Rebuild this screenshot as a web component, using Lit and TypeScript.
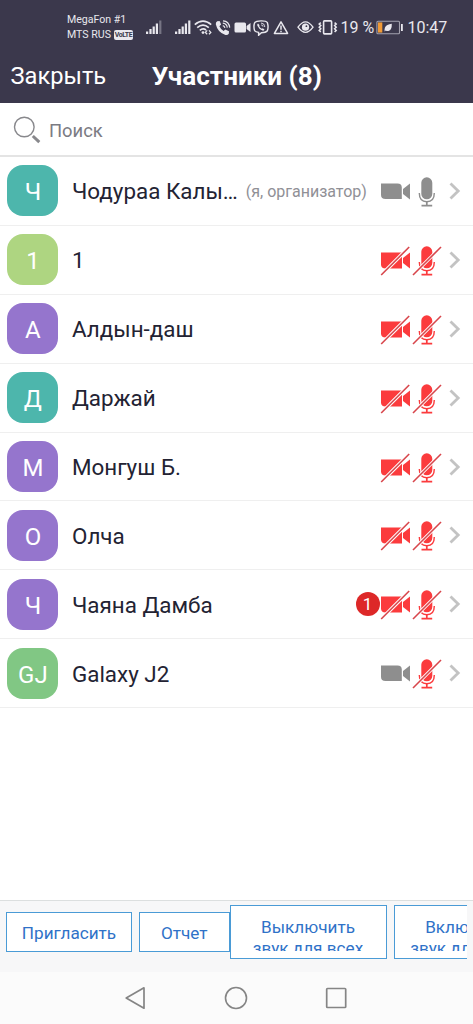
import { LitElement, html, svg, css, nothing } from "lit";
import { customElement, property } from "lit/decorators.js";
import { classMap } from "lit/directives/class-map.js";

interface Participant {
  name: string;
  initials: string;
  tone: "teal" | "lime" | "violet" | "green";
  note?: string;
  badge?: number;
  camera: boolean;
  mic: boolean;
}

const PEOPLE: Participant[] = [
  { name: "Чодураа Калы…", initials: "Ч", tone: "teal", note: "(я, организатор)", camera: true, mic: true },
  { name: "1", initials: "1", tone: "lime", camera: false, mic: false },
  { name: "Алдын-даш", initials: "А", tone: "violet", camera: false, mic: false },
  { name: "Даржай", initials: "Д", tone: "teal", camera: false, mic: false },
  { name: "Монгуш Б.", initials: "М", tone: "violet", camera: false, mic: false },
  { name: "Олча", initials: "О", tone: "violet", camera: false, mic: false },
  { name: "Чаяна Дамба", initials: "Ч", tone: "violet", badge: 1, camera: false, mic: false },
  { name: "Galaxy J2", initials: "GJ", tone: "green", camera: true, mic: false },
];

const signal = (dimLast: boolean) => html`
  <svg class="signal" width="17" height="15" viewBox="0 0 17 15" fill="#e9e8ee">
    <rect x="1" y="11.5" width="2.2" height="2.5" />
    <rect x="4.4" y="9" width="2.2" height="5" />
    <rect x="7.6" y="6.5" width="2.2" height="7.5" />
    <rect x="10.8" y="3.5" width="2.2" height="10.5" />
    <rect x="14.2" y="0.5" width="2.2" height="13.5" opacity=${dimLast ? 0.35 : 1} />
  </svg>
`;

@customElement("status-bar")
export class StatusBar extends LitElement {
  static styles = css`
    :host {
      display: flex;
      height: 50px;
      padding-left: 67px;
      box-sizing: border-box;
      color: #e9e8ee;
      align-items: flex-start;
      white-space: nowrap;
    }
    svg { display: block; flex: none; margin-top: 20px; }
    .carriers { width: 78px; padding-top: 12px; font-size: 10.6px; line-height: 15px; flex: none; }
    .line { display: flex; align-items: center; gap: 3px; }
    .volte {
      width: 19px; height: 10px; border-radius: 2px; background: #e9e8ee; color: #3b384c;
      font-size: 7px; line-height: 10px; font-weight: 700; text-align: center; letter-spacing: -0.4px;
    }
    .gap { margin-left: 11.5px; }
    .wifi { margin-left: 3px; }
    .phone { margin-left: 3px; }
    .cam { margin-left: 3px; }
    .viber { margin-left: 2px; }
    .warn { margin-left: 4px; }
    .eye { margin-left: 8px; }
    .vibe { margin-left: 4px; }
    .percent { margin: 16px 0 0 3px; width: 34px; font-size: 16px; line-height: 23px; flex: none; }
    .battery { margin-left: 1px; }
    .clock { margin: 16px 0 0 4px; font-size: 16px; line-height: 23px; flex: none; }
  `;

  render() {
    return html`
      <div class="carriers">
        <div class="line">MegaFon #1</div>
        <div class="line">MTS RUS <span class="volte">VoLTE</span></div>
      </div>
      ${signal(true)}
      <div class="gap">${signal(false)}</div>
      <svg class="wifi" width="18" height="15" viewBox="0 0 18 15" fill="none" stroke="#e9e8ee" stroke-width="1.7">
        <path d="M0.8 4.6Q9 -2.4 17.2 4.6M3.2 7.6Q9 2.6 14.8 7.6M5.8 10.4Q9 7.6 12 10" />
        <circle cx="9" cy="12.6" r="1.4" fill="#e9e8ee" stroke="none" />
        <path d="M13.2 10.4L11.4 12.4L13.2 14.2M15 10.4L16.8 12.4L15 14.2" stroke-width="1.3" />
      </svg>
      <svg class="phone" width="16" height="16" viewBox="0 0 16 16">
        <path d="M2.2 1.2L4.6 1L6.1 4.6L4.4 6.3Q5.7 9.4 8.6 11L10.3 9.5L14 11.3L13.8 13.7Q12.6 15.3 10.5 14.9Q2.7 12.6 0.8 4.2Q0.6 2.2 2.2 1.2Z" fill="#e9e8ee" />
        <path d="M8 0.8Q14 1.2 14.7 7.6M7.8 3.2Q11.8 3.6 12.3 7.6M7.8 5.6Q9.6 6 9.9 7.8" fill="none" stroke="#e9e8ee" stroke-width="1.2" />
      </svg>
      <svg class="cam" width="17" height="14" viewBox="0 0 17 14" fill="#e9e8ee">
        <rect x="0.5" y="2.5" width="11.5" height="10" rx="1.5" />
        <path d="M12.6 6L16.5 3V12L12.6 9Z" />
      </svg>
      <svg class="viber" width="16" height="16" viewBox="0 0 16 16" fill="none" stroke="#e9e8ee">
        <path d="M8 0.9Q13.2 0.8 14.4 2.7Q15.7 6.8 14.4 10.8Q12.8 12.8 8.4 12.8L5.6 15.3V12.4Q2.6 11.8 1.6 10.6Q0.3 6.6 1.6 2.8Q3 0.9 8 0.9Z" stroke-width="1.4" />
        <path d="M5 3.5Q3.8 4.3 4.4 5.7Q6 9.3 9.5 10.6Q11 10.8 11.4 9.4L9.8 8.2L8.8 8.8Q7 8 6.1 6L6.6 5.2Z" fill="#e9e8ee" stroke="none" />
        <path d="M8 3Q11.6 3.2 11.8 7M8.2 4.9Q9.8 5 10 6.6" stroke-width="0.9" />
      </svg>
      <svg class="warn" width="16" height="15" viewBox="0 0 16 15" fill="none" stroke="#e9e8ee">
        <path d="M8 1.8L14.6 13.4H1.4Z" stroke-width="1.5" stroke-linejoin="round" />
        <path d="M8 5.5V9.8M8 10.8V12.2" stroke-width="1.5" />
      </svg>
      <svg class="eye" width="17" height="15" viewBox="0 0 17 15">
        <path d="M1 7.2Q8.5 -3.4 16 7.2Q8.5 17.6 1 7.2Z" fill="none" stroke="#e9e8ee" stroke-width="1.4" />
        <circle cx="8.5" cy="7.2" r="3.6" fill="#e9e8ee" />
        <circle cx="9.4" cy="6.2" r="0.9" fill="#3b384c" />
      </svg>
      <svg class="vibe" width="20" height="15" viewBox="0 0 20 15" fill="none" stroke="#e9e8ee">
        <rect x="5.6" y="0.9" width="8" height="13" rx="0.8" stroke-width="1.6" />
        <path d="M2.8 2.6L1.2 4L2.8 5.6L1.2 7.2L2.8 8.8L1.2 10.4L2.8 12M16.6 2.6L18.2 4L16.6 5.6L18.2 7.2L16.6 8.8L18.2 10.4L16.6 12" stroke-width="1.5" />
      </svg>
      <div class="percent">19 %</div>
      <svg class="battery" width="28" height="15" viewBox="0 0 28 15">
        <rect x="0.9" y="1.3" width="22.6" height="12.4" rx="1" fill="none" stroke="#a3a1ae" stroke-width="1.1" />
        <rect x="2" y="2.4" width="4.3" height="10.2" fill="#f09a37" />
        <path d="M8.6 11.4Q8 6.6 11.4 5Q13.4 4.4 15.8 3.8Q16 10.4 12.4 10.9Q10.6 11.1 9.8 10.4Z" fill="#e9e8ee" />
        <rect x="25" y="4" width="1.8" height="7" fill="#e9e8ee" />
      </svg>
      <div class="clock">10:47</div>
    `;
  }
}

@customElement("participant-row")
export class ParticipantRow extends LitElement {
  @property({ attribute: false }) person!: Participant;

  static styles = css`
    :host {
      display: flex;
      align-items: center;
      height: 68.9px;
      box-sizing: border-box;
      border-bottom: 1px solid #efefef;
      padding: 0 12px 0 7.4px;
      white-space: nowrap;
    }
    .avatar {
      width: 51px; height: 51px; border-radius: 16px; flex: none;
      display: flex; align-items: center; justify-content: center;
      color: #fff; font-size: 24px; line-height: 28px; padding-top: 3px; box-sizing: border-box;
    }
    .teal { background: #4db6ac; }
    .lime { background: #aed581; }
    .violet { background: #9575cd; }
    .green { background: #81c784; }
    .name { margin-left: 13.6px; font-size: 22.4px; line-height: 28px; color: #232333; padding-top: 1px; }
    .note { margin-left: 8px; font-size: 16px; color: #909096; padding-top: 1px; }
    .tools { margin-left: auto; display: flex; align-items: center; flex: none; }
    .badge {
      width: 24px; height: 24px; border-radius: 50%; background: #dd2828; color: #fff;
      font-size: 17px; line-height: 24px; text-align: center; margin-right: 0.5px;
    }
    svg { display: block; }
    .chevron { margin-left: 7px; }
  `;

  private camera(on: boolean) {
    const fill = on ? "#8e8e8e" : "#fb3b3d";
    return html`<svg width="31" height="32" viewBox="0 0 31 32">
      ${on
        ? svg`<path d="M1 8.5H17.5Q21.8 8.5 21.8 12.5V24H5.5Q1 24 1 20Z" fill=${fill} />`
        : svg`<path d="M1 8.5H22V24.5H5.5Q1 24.5 1 20.5Z" fill=${fill} />`}
      <path d="M23 14L30 8.5V24.5L23 19Z" fill=${fill} />
      ${on
        ? nothing
        : svg`<path d="M1.2 31L29.2 3" stroke="#fff" stroke-width="3.6" />
            <path d="M1.2 31L29.2 3" stroke="#d8464c" stroke-width="1.6" />`}
    </svg>`;
  }

  private mic(on: boolean) {
    const fill = on ? "#8e8e8e" : "#fb3b3d";
    return html`<svg width="31" height="32" viewBox="0 0 31 32">
      <rect x="10.3" y="2.3" width="11" height="22" rx="5.5" fill=${fill} />
      <path d="M8.3 18Q8.3 26.7 15.8 26.7Q23.3 26.7 23.3 18" fill="none" stroke=${fill} stroke-width="1.4" />
      <path d="M15.8 26.5V30.5M10.5 30.7H21.2" fill="none" stroke=${fill} stroke-width="1.7" />
      ${on
        ? nothing
        : svg`<path d="M2 31L30 3" stroke="#fff" stroke-width="3.2" />
            <path d="M2 31L30 3" stroke="#d8464c" stroke-width="1.6" />`}
    </svg>`;
  }

  render() {
    const p = this.person;
    return html`
      <div class=${classMap({ avatar: true, [p.tone]: true })}>${p.initials}</div>
      <div class="name">${p.name}</div>
      ${p.note ? html`<div class="note">${p.note}</div>` : nothing}
      <div class="tools">
        ${p.badge ? html`<div class="badge">${p.badge}</div>` : nothing}
        ${this.camera(p.camera)} ${this.mic(p.mic)}
        <svg class="chevron" width="12" height="18" viewBox="0 0 12 18" fill="none" stroke="#c3c3c3" stroke-width="2.8">
          <path d="M1.5 1.5L9.2 9L1.5 16.5" />
        </svg>
      </div>
    `;
  }
}

@customElement("app-root")
export class AppRoot extends LitElement {
  static styles = css`
    :host {
      display: flex;
      flex-direction: column;
      width: 473px;
      height: 1024px;
      overflow: hidden;
      background: #fff;
      font-family: Roboto, "Noto Sans", sans-serif;
    }
    .top { background: #3b384c; height: 103px; flex: none; }
    .header { display: grid; grid-template-columns: 1fr auto 1fr; height: 51px; padding: 0 10px 0 10.5px; align-items: center; color: #fff; }
    .close { font-size: 23.7px; line-height: 30px; }
    .title { font-size: 26.1px; line-height: 30px; font-weight: 700; }
    .search {
      display: flex; align-items: center; height: 54px; flex: none; box-sizing: border-box;
      border-bottom: 2px solid #e4e4e4; padding-left: 13px; gap: 8px; color: #7b7b83; font-size: 18.4px; line-height: 24px;
    }
    .search span { padding-top: 3px; }
    .search svg { margin-top: 2px; }
    svg { display: block; }
    .list { flex: 1; }
    .actions {
      display: flex; align-items: flex-start; height: 72px; flex: none; box-sizing: border-box; overflow: hidden;
      background: #f7f7f8; border-top: 1.5px solid #dcdfdf; padding-left: 6px;
    }
    .scroller { display: flex; width: 461px; overflow: hidden; align-items: center; height: 54px; margin-top: 4px; }
    .btn {
      flex: none; box-sizing: border-box; border: 1.5px solid #4a9bd6; background: #fff; color: #2f72c8;
      font-size: 17.15px; line-height: 20.5px; text-align: center; height: 40px;
      display: flex; align-items: center; justify-content: center;
    }
    .invite, .report { padding-top: 2px; }
    .invite { width: 126px; }
    .report { width: 90.5px; margin-left: 7px; }
    .tall { width: 157px; height: 54px; padding-top: 11px; align-items: flex-start; }
    .clip { height: 34px; overflow: hidden; }
    .next { margin-left: 7.5px; width: 143px; }
    .nav { display: flex; align-items: center; height: 52px; flex: none; background: #fbfbfb; padding-left: 124px; gap: 76px; }
  `;

  render() {
    return html`
      <div class="top">
        <status-bar></status-bar>
        <div class="header">
          <div class="close">Закрыть</div>
          <div class="title">Участники (8)</div>
        </div>
      </div>
      <div class="search">
        <svg width="28" height="28" viewBox="0 0 28 28" fill="none" stroke="#88888c">
          <circle cx="11.3" cy="11" r="9.8" stroke-width="1.4" />
          <path d="M19.8 20L26.3 26.2" stroke-width="3" />
        </svg>
        <span>Поиск</span>
      </div>
      <div class="list">
        ${PEOPLE.map((p) => html`<participant-row .person=${p}></participant-row>`)}
      </div>
      <div class="actions">
        <div class="scroller">
          <div class="btn invite">Пригласить</div>
          <div class="btn report">Отчет</div>
          <div class="btn tall"><div class="clip">Выключить<br />звук для всех</div></div>
          <div class="btn tall next"><div class="clip">Включить<br />звук для всех</div></div>
        </div>
      </div>
      <div class="nav">
        <svg width="24" height="24" viewBox="0 0 24 24" fill="none" stroke="#858585" stroke-width="1.7" stroke-linejoin="round">
          <path d="M20 1.8V22.2L2.2 12Z" />
        </svg>
        <svg width="24" height="24" viewBox="0 0 24 24" fill="none" stroke="#858585" stroke-width="1.6">
          <circle cx="12" cy="12" r="10.5" />
        </svg>
        <svg width="24" height="24" viewBox="0 0 24 24" fill="none" stroke="#858585" stroke-width="1.7">
          <rect x="2.7" y="2.5" width="19" height="19" rx="0.8" />
        </svg>
      </div>
    `;
  }
}
